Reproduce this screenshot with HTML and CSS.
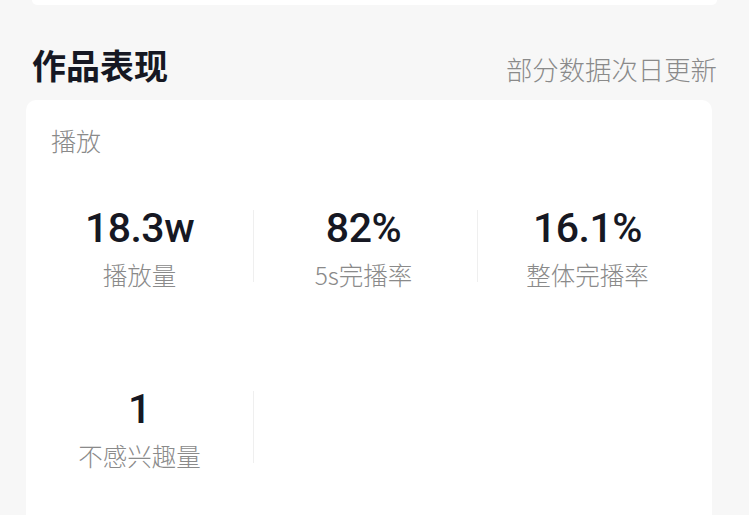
FILE: index.html
```html
<!DOCTYPE html>
<html lang="zh">
<head>
<meta charset="utf-8">
<link rel="stylesheet" href="styles.css">
</head>
<body>
<div class="page">
  <div class="top-card"></div>
  <div class="section-head">
    <h2 class="section-title">作品表现</h2>
    <span class="section-note">部分数据次日更新</span>
  </div>
  <div class="card">
    <div class="card-title">播放</div>
    <div class="stats">
      <div class="stat"><div class="stat-value">18.3w</div><div class="stat-label">播放量</div></div>
      <div class="stat"><div class="stat-value">82%</div><div class="stat-label">5s完播率</div></div>
      <div class="stat"><div class="stat-value">16.1%</div><div class="stat-label">整体完播率</div></div>
      <div class="stat"><div class="stat-value">1</div><div class="stat-label">不感兴趣量</div></div>
    </div>
  </div>
</div>
</body>
</html>
```
FILE: styles.css
```css
* { box-sizing: border-box; }
html, body {
  margin: 0;
  padding: 0;
  background: #f7f7f7;
  height: 515px;
  overflow: hidden;
}
body {
  font-family: "Noto Sans CJK SC", "Noto Sans", sans-serif;
  color: #161823;
}
.page {
  width: 749px;
}
.top-card {
  margin: 0 32px 0 32px;
  height: 5px;
  background: #fff;
  border-radius: 0 0 8px 8px;
}
.section-head {
  margin: 40px 32px 0 32px;
  display: flex;
  justify-content: space-between;
  align-items: baseline;
}
.section-title {
  margin: 0;
  font-size: 34px;
  line-height: 40px;
  font-weight: 700;
  color: #161823;
}
.section-note {
  font-size: 26.4px;
  line-height: 32px;
  font-weight: 300;
  color: #8a8a8a;
  position: relative;
  top: 1px;
}
.card {
  margin: 15px 0 0 26px;
  width: 686px;
  height: 415px;
  background: #fff;
  border-radius: 10px 10px 0 0;
  padding-top: 22px;
}
.card-title {
  padding-left: 25px;
  font-size: 25px;
  line-height: 36px;
  font-weight: 300;
  color: #8a8a8a;
}
.stats {
  margin-top: 52px;
  padding-left: 4px;
  display: grid;
  grid-template-columns: repeat(3, 224px);
  row-gap: 104px;
}
.stat {
  position: relative;
  padding-right: 5px;
  text-align: center;
}
.stat::after {
  content: "";
  position: absolute;
  right: 0;
  top: 0;
  width: 1px;
  height: 72px;
  background: #efefef;
}
.stat:nth-child(3n)::after { display: none; }
.stat-value {
  font-family: Roboto, "Liberation Sans", sans-serif;
  font-weight: 500;
  font-size: 41px;
  line-height: 36px;
  letter-spacing: -0.5px;
  color: #161823;
}
.stat-label {
  margin-top: 17px;
  font-size: 24.5px;
  line-height: 24px;
  font-weight: 300;
  color: #8a8a8a;
}
```
